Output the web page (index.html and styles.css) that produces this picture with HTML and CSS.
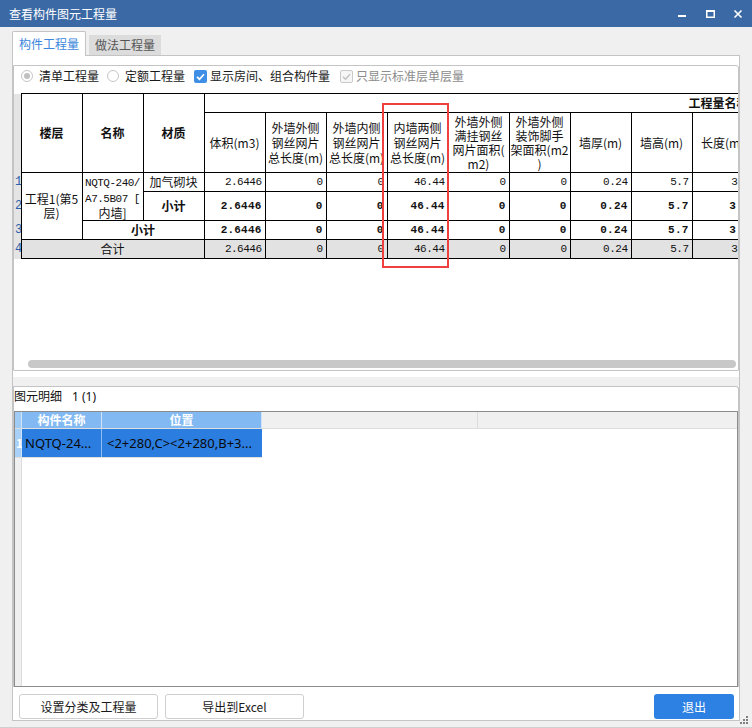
FILE: index.html
```html
<!DOCTYPE html>
<html lang="zh-CN">
<head>
<meta charset="utf-8">
<title>查看构件图元工程量</title>
<link rel="stylesheet" href="styles.css">
</head>
<body>
<div class="window">
  <div class="titlebar">
    <span class="title">查看构件图元工程量</span>
    <div class="controls">
      <svg width="28" height="27" viewBox="0 0 28 27"><rect x="10" y="15" width="8" height="2" fill="#fff"/></svg>
      <svg width="28" height="27" viewBox="0 0 28 27"><rect x="10.75" y="10.75" width="7.5" height="6.5" fill="none" stroke="#fff" stroke-width="1.5"/><rect x="10" y="10" width="9" height="2" fill="#fff"/></svg>
      <svg width="28" height="27" viewBox="0 0 28 27"><path d="M10.5 10.5 L17.5 17.5 M17.5 10.5 L10.5 17.5" stroke="#fff" stroke-width="1.6" fill="none"/></svg>
    </div>
  </div>
  <div class="client">
    <div class="tabs">
      <div class="tab active">构件工程量</div>
      <div class="tab">做法工程量</div>
    </div>
    <div class="tabpanel">
      <div class="upper">
        <div class="options">
          <span class="radio checked"></span><span class="lbl">清单工程量</span>
          <span class="radio r2"></span><span class="lbl">定额工程量</span>
          <span class="check on"><svg width="13" height="13" viewBox="0 0 13 13"><polyline points="3,6.8 5.5,9.2 10,4.2" fill="none" stroke="#fff" stroke-width="1.7"/></svg></span><span class="lbl">显示房间、组合构件量</span>
          <span class="check off"><svg width="13" height="13" viewBox="0 0 13 13"><polyline points="3,6.8 5.5,9.2 10,4.2" fill="none" stroke="#c2c2c2" stroke-width="1.5"/></svg></span><span class="lbl dis">只显示标准层单层量</span>
        </div>
        <div class="gridwrap">
          <table class="qty">
            <colgroup><col class="w-rh"><col class="w-c" span="12"></colgroup>
            <tr class="h1">
              <th class="rh" rowspan="2"></th>
              <th class="hb" rowspan="2">楼层</th>
              <th class="hb" rowspan="2">名称</th>
              <th class="hb" rowspan="2">材质</th>
              <th class="grp" colspan="9">工程量名称</th>
            </tr>
            <tr class="h2">
              <th>体积(m3)</th>
              <th>外墙外侧<br>钢丝网片<br>总长度(m)</th>
              <th>外墙内侧<br>钢丝网片<br>总长度(m)</th>
              <th>内墙两侧<br>钢丝网片<br>总长度(m)</th>
              <th class="l4">外墙外侧<br>满挂钢丝<br>网片面积(<br>m2)</th>
              <th class="l4">外墙外侧<br>装饰脚手<br>架面积(m2<br>)</th>
              <th>墙厚(m)</th>
              <th>墙高(m)</th>
              <th>长度(m)</th>
            </tr>
            <tr class="r1">
              <td class="rh">1</td>
              <td class="floor" rowspan="3">工程1(第5<br>层)</td>
              <td class="name" rowspan="2"><span class="m">NQTQ-240/</span><br><span class="m">A7.5B07 [</span><br>内墙]</td>
              <td>加气砌块</td>
              <td class="n">2.6446</td><td class="n">0</td><td class="n">0</td><td class="n">46.44</td><td class="n">0</td><td class="n">0</td><td class="n">0.24</td><td class="n">5.7</td><td class="n">3.9</td>
            </tr>
            <tr class="r2 b">
              <td class="rh">2</td>
              <td class="hb">小计</td>
              <td class="n">2.6446</td><td class="n">0</td><td class="n">0</td><td class="n">46.44</td><td class="n">0</td><td class="n">0</td><td class="n">0.24</td><td class="n">5.7</td><td class="n">3.9</td>
            </tr>
            <tr class="r3 b">
              <td class="rh">3</td>
              <td class="hb" colspan="2">小计</td>
              <td class="n">2.6446</td><td class="n">0</td><td class="n">0</td><td class="n">46.44</td><td class="n">0</td><td class="n">0</td><td class="n">0.24</td><td class="n">5.7</td><td class="n">3.9</td>
            </tr>
            <tr class="r4">
              <td class="rh">4</td>
              <td colspan="3">合计</td>
              <td class="n">2.6446</td><td class="n">0</td><td class="n">0</td><td class="n">46.44</td><td class="n">0</td><td class="n">0</td><td class="n">0.24</td><td class="n">5.7</td><td class="n">3.9</td>
            </tr>
          </table>
          <div class="highlight"></div>
        </div>
        <div class="hscroll"></div>
      </div>
      <div class="splitter"></div>
      <div class="lower">
        <div class="lower-title">图元明细<span class="cnt">1 (1)</span></div>
        <div class="detail">
          <div class="drow dhead">
            <div class="rh"></div>
            <div class="dc c-name">构件名称</div>
            <div class="dc c-pos">位置</div>
            <div class="dc c-b1"></div>
            <div class="dc c-b2"></div>
          </div>
          <div class="drow dsel">
            <div class="rh">1</div>
            <div class="dc c-name">NQTQ-24...</div>
            <div class="dc c-pos">&lt;2+280,C&gt;&lt;2+280,B+3...</div>
          </div>
          <div class="rhfill"></div>
        </div>
      </div>
      <div class="buttons">
        <div class="btn">设置分类及工程量</div>
        <div class="btn">导出到Excel</div>
        <div class="btn exit">退出</div>
      </div>
    </div>
  </div>
  <svg class="grip" width="10" height="10" viewBox="0 0 10 10">
    <rect x="7" y="1" width="2" height="2" fill="#808080"/>
    <rect x="4" y="4" width="2" height="2" fill="#808080"/>
    <rect x="7" y="4" width="2" height="2" fill="#808080"/>
    <rect x="1" y="7" width="2" height="2" fill="#808080"/>
    <rect x="4" y="7" width="2" height="2" fill="#808080"/>
    <rect x="7" y="7" width="2" height="2" fill="#808080"/>
  </svg>
</div>
</body>
</html>
```

FILE: styles.css
```css
* { box-sizing: border-box; }
html, body { margin: 0; padding: 0; }
body {
  width: 752px;
  height: 728px;
  overflow: hidden;
  background: #f0f0f0;
  font-family: "Noto Sans CJK SC", "Noto Sans", sans-serif;
  font-size: 12px;
  color: #1a1a1a;
}
.window {
  position: relative;
  width: 752px;
  height: 728px;
  background: #f0f0f0;
  border-bottom: 1px solid #cfcfcf;
}
.titlebar {
  height: 27px;
  background: #3a69a5;
  display: flex;
  align-items: center;
  color: #fff;
}
.title {
  flex: 1;
  padding-left: 9px;
  line-height: 27px;
  font-size: 12px;
}
.controls { display: flex; }
.controls svg { display: block; }

.client { padding: 4px 0 0 12px; }
.tabs {
  display: flex;
  align-items: flex-end;
  height: 24px;
  position: relative;
  z-index: 1;
}
.tab {
  height: 20px;
  line-height: 20px;
  padding: 0 6px;
  margin-left: 3px;
  background: #dcdcdc;
  color: #555;
}
.tab.active {
  height: 25px;
  line-height: 24px;
  margin-left: 0;
  margin-bottom: -1px;
  background: #fff;
  color: #3a86dc;
  border: 1px solid #c4c4c4;
  border-bottom: none;
  border-radius: 2px 2px 0 0;
}
.tabpanel {
  width: 728px;
  height: 666px;
  border: 1px solid #c4c4c4;
  background: #fff;
  display: flex;
  flex-direction: column;
}

.upper {
  margin-top: 9px;
  height: 306px;
  border: 1px solid #c4c4c4;
  border-top-right-radius: 3px;
  display: flex;
  flex-direction: column;
}
.options {
  height: 20px;
  display: flex;
  align-items: center;
  padding-left: 7px;
  line-height: 20px;
}
.radio {
  width: 12px;
  height: 12px;
  border: 1px solid #c6c6c6;
  border-radius: 50%;
  background: #fff;
  margin-right: 6px;
  display: flex;
  align-items: center;
  justify-content: center;
}
.radio.checked::after {
  content: "";
  width: 6px;
  height: 6px;
  border-radius: 50%;
  background: #c0c0c0;
}
.radio.r2 { margin-left: 8px; }
.check {
  width: 13px;
  height: 13px;
  border-radius: 2px;
  margin-right: 3px;
  display: flex;
}
.check svg { display: block; }
.check.on { background: #3f8fe6; margin-left: 9px; }
.check.off { background: #f6f6f6; border: 1px solid #cacaca; margin-left: 10px; }
.check.off svg { margin: -1px; }
.lbl.dis { color: #8c8c8c; }

.gridwrap {
  position: relative;
  margin-top: 7px;
  height: 267px;
  overflow: hidden;
}
.qty {
  border-collapse: collapse;
  table-layout: fixed;
  width: 739px;
}
.w-rh { width: 7px; }
.w-c { width: 61px; }
.qty th, .qty td {
  border: 1px solid #000;
  padding: 0 2px;
  font-weight: normal;
  text-align: center;
  vertical-align: middle;
  line-height: 14px;
  white-space: nowrap;
  overflow: hidden;
  color: #111;
}
.qty .hb { font-weight: bold; }
.qty .grp {
  text-align: right;
  font-weight: bold;
  padding-right: 4px;
}
.qty .h1 { height: 19px; }
.qty .h2 { height: 60px; }
.qty .h2 th { line-height: 15px; padding: 0 1px; }
.qty .h2 th.l4 { line-height: 14px; }
.qty .r1 { height: 19px; }
.qty .r2 { height: 29px; }
.qty .r3 { height: 19px; }
.qty .r4 { height: 19px; }
.qty .r4 td { background: #e2e2e2; }
.qty .rh,
.qty .r4 .rh {
  border-top: none;
  border-bottom: none;
  border-left: none;
  background: #e4e4e4;
  padding: 0 0 0 1px;
  text-align: left;
  color: #2a5ea8;
  font-family: "Liberation Mono", monospace;
  font-size: 12px;
  letter-spacing: -1px;
}
.qty .n {
  text-align: right;
  padding-right: 3px;
  font-family: "Liberation Mono", monospace;
  font-size: 11px;
  letter-spacing: -0.5px;
}
.qty .b .n { font-weight: bold; letter-spacing: 0.2px; }
.qty .m {
  font-family: "Liberation Mono", monospace;
  font-size: 11px;
  letter-spacing: -0.5px;
}
.qty .name { line-height: 14px; }
.highlight {
  position: absolute;
  left: 368px;
  top: 10px;
  width: 67px;
  height: 165px;
  border: 2px solid #ef3f3f;
}
.hscroll {
  margin-left: 14px;
  width: 708px;
  height: 8px;
  border-radius: 4px;
  background: #c8c8c8;
}

.splitter {
  height: 15px;
  background: linear-gradient(#fff 0, #fff 6px, #f0f0f0 6px, #f0f0f0 100%);
}

.lower {
  height: 301px;
  border: 1px solid #c4c4c4;
  border-bottom: none;
  border-top-right-radius: 3px;
  display: flex;
  flex-direction: column;
}
.lower-title {
  height: 24px;
  line-height: 18px;
  color: #111;
}
.lower-title .cnt {
  margin-left: 10px;
  font-family: "Noto Sans", sans-serif;
  font-size: 12px;
}
.detail {
  flex: 1;
  border: 1px solid #8c8c8c;
  display: flex;
  flex-direction: column;
}
.drow { display: flex; }
.drow .rh { width: 7px; flex: none; }
.dc { flex: none; }
.c-name { width: 80px; }
.c-pos { width: 160px; }
.c-b1 { width: 216px; }
.c-b2 { flex: 1; }
.dhead {
  height: 17px;
  border-bottom: 1px solid #dedede;
  line-height: 16px;
}
.dhead .rh { background: #a0cbf5; border-right: 1px solid #d0e4f8; }
.dhead .c-name, .dhead .c-pos {
  background: #82b9f3;
  color: #fff;
  font-weight: bold;
  text-align: center;
  border-right: 1px solid #cfe2f7;
}
.dhead .c-b1 { background: #f0f0f0; border-right: 1px solid #dcdcdc; }
.dhead .c-b2 { background: #f0f0f0; }
.dsel {
  width: 247px;
  height: 29px;
  border-bottom: 1px solid #e0e0e0;
}
.dsel .rh {
  background: #a9d0f7;
  color: #fff;
  font-weight: bold;
  line-height: 28px;
  padding-left: 1px;
  border-right: 1px solid #d0e4f8;
}
.dsel .dc {
  background: #2b7de0;
  color: #0a0a0a;
  font-family: "Noto Sans", sans-serif;
  font-size: 13px;
  line-height: 28px;
  white-space: nowrap;
  overflow: hidden;
}
.dsel .c-name { padding-left: 3px; border-right: 1px solid #8fbdee; }
.dsel .c-pos { padding-left: 5px; }
.rhfill {
  flex: 1;
  width: 7px;
  background: #f0f0f0;
  border-right: 1px solid #dcdcdc;
}

.buttons {
  display: flex;
  margin-top: 7px;
  height: 25px;
  padding: 0 5px 0 6px;
}
.btn {
  width: 139px;
  height: 25px;
  margin-right: 7px;
  border: 1px solid #cfcfcf;
  border-radius: 3px;
  background: #fff;
  text-align: center;
  line-height: 23px;
  color: #1a1a1a;
}
.btn.exit {
  margin-left: auto;
  margin-right: 0;
  width: 80px;
  border: none;
  background: #2c81e2;
  color: #fff;
  line-height: 25px;
}
.grip {
  position: absolute;
  right: 3px;
  bottom: 2px;
}
```
